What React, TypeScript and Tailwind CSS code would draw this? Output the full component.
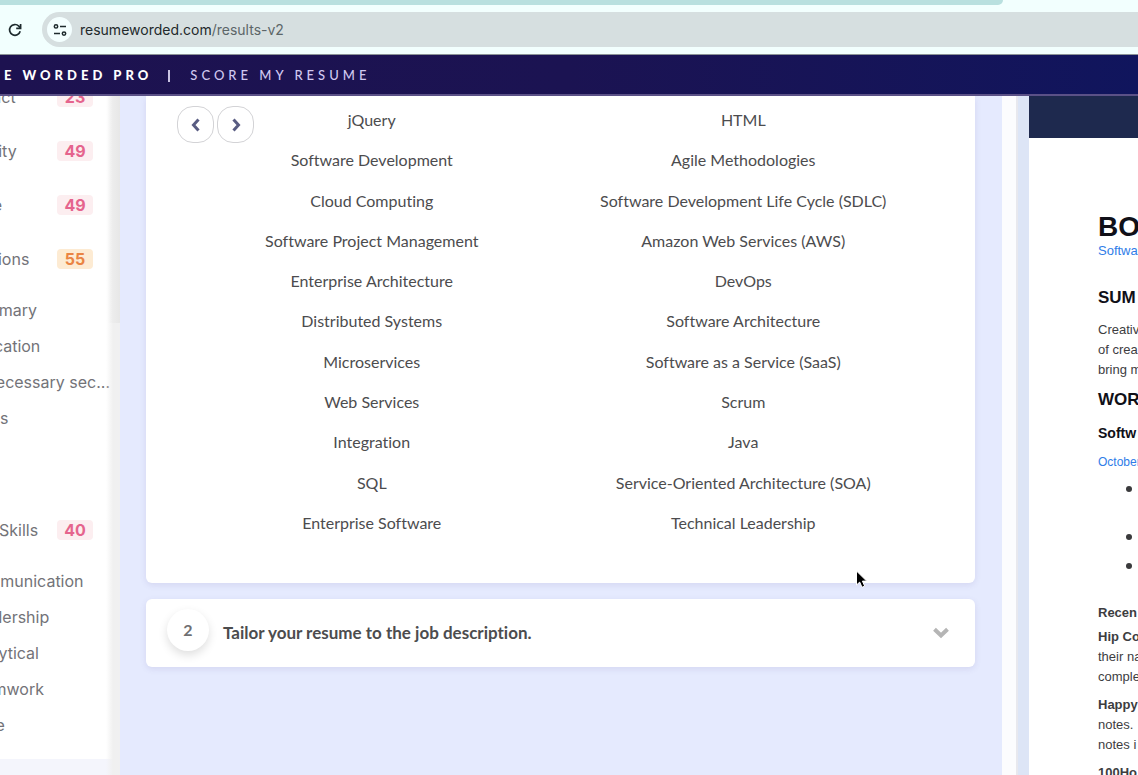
import React from "react";

type Tone = "low" | "mid";

const tones: Record<Tone, string> = {
  low: "bg-[#fceef0] text-[#e5648d]",
  mid: "bg-[#fdebd3] text-[#ea8443]",
};

const keywords: [string, string][] = [
  ["jQuery", "HTML"],
  ["Software Development", "Agile Methodologies"],
  ["Cloud Computing", "Software Development Life Cycle (SDLC)"],
  ["Software Project Management", "Amazon Web Services (AWS)"],
  ["Enterprise Architecture", "DevOps"],
  ["Distributed Systems", "Software Architecture"],
  ["Microservices", "Software as a Service (SaaS)"],
  ["Web Services", "Scrum"],
  ["Integration", "Java"],
  ["SQL", "Service-Oriented Architecture (SOA)"],
  ["Enterprise Software", "Technical Leadership"],
];

function Category({ name, score, tone = "low" }: { name: string; score: number; tone?: Tone }) {
  return (
    <a href="#" className="flex h-[54px] items-center justify-between pr-[26px]">
      <span>{name}</span>
      <span className={`flex h-5 w-9 items-center justify-center rounded-sm text-base font-bold ${tones[tone]}`}>
        {score}
      </span>
    </a>
  );
}

function SubList({ items }: { items: string[] }) {
  return (
    <ul className="pt-1.5 pl-px">
      {items.map((item) => (
        <li key={item}>
          <a href="#" className="flex h-9 items-center">
            {item}
          </a>
        </li>
      ))}
    </ul>
  );
}

function BrowserBar() {
  return (
    <div className="shrink-0 border-b border-[#8b9396] bg-[#f2fffe]">
      <div className="mr-[135px] h-[5px] rounded-br-lg bg-[#b9e0df]" />
      <div className="flex items-center pt-[7px] pb-[7px] pl-[7px]">
        <button type="button" aria-label="Reload" className="text-[#1f2b2e]">
          <svg width="16" height="16" viewBox="0 0 16 16" fill="none" stroke="currentColor" strokeWidth="1.7">
            <path d="M13.2 9.300A5.400 5.400 0 1 1 11.800 4.100L13.400 5.800" />
            <path d="M13.600 2v4.400H9.200" />
          </svg>
        </button>
        <div className="ml-[19px] flex h-[35px] grow items-center rounded-l-full bg-[#d6dfe0] pl-[5px]">
          <button
            type="button"
            aria-label="View site information"
            className="flex size-[25px] shrink-0 items-center justify-center rounded-full bg-[#f4ffff] text-[#1f2b2e]"
          >
            <svg width="14" height="14" viewBox="0 0 14 14" fill="none" stroke="currentColor" strokeWidth="1.5">
              <circle cx="3" cy="3.4" r="1.7" />
              <path d="M7 3.4h6M1 10.6h6" />
              <circle cx="11" cy="10.6" r="1.7" />
            </svg>
          </button>
          <div className="pl-2 font-['Inter',sans-serif] text-[14px] text-[#22292b]">
            resumeworded.com<span className="text-[#5c6668]">/results-v2</span>
          </div>
        </div>
      </div>
    </div>
  );
}

function SiteHeader() {
  return (
    <header className="flex h-[41px] shrink-0 items-center border-b-2 border-[#5b5187] bg-linear-to-r from-[#1d1250] via-[#1b1352] to-[#10155d] pt-0.5 pl-1 font-['Lato',sans-serif] text-[13px] tracking-[4px] whitespace-nowrap">
      <a href="#" className="font-black text-white">E WORDED PRO</a>
      <span className="mr-5 ml-4 h-3 w-0.5 bg-[#c9c3e2]" />
      <a href="#" className="font-medium text-[#d0c8f0]">SCORE MY RESUME</a>
    </header>
  );
}

function Sidebar() {
  return (
    <aside className="relative w-[120px] shrink-0 overflow-hidden bg-[#f4f5fc] text-base whitespace-nowrap text-[#737378]">
      <nav className="-mt-[26px] -ml-9 bg-white pr-px pb-4">
        <Category name="Impact" score={23} />
        <Category name="Brevity" score={49} />
        <Category name="Style" score={49} />
        <Category name="Sections" score={55} tone="mid" />
        <SubList items={["Summary", "Education", "Unnecessary sec...", "Dates"]} />
        <div className="pt-[67px]">
          <Category name="Soft Skills" score={40} />
        </div>
        <SubList items={["Communication", "Leadership", "Analytical", "Teamwork", "Drive"]} />
      </nav>
      <div className="absolute inset-y-0 right-0 w-3.5 bg-linear-to-r from-transparent via-[#f0f0f0] to-[#f0f0f1]" />
      <div className="absolute top-0 right-0 h-[227px] w-3 bg-linear-to-r from-transparent to-[#e7e7e7]" />
    </aside>
  );
}

function ArrowButton({ label, path }: { label: string; path: string }) {
  return (
    <button
      type="button"
      aria-label={label}
      className="flex size-[37px] items-center justify-center rounded-2xl border border-[#d3d3d6] bg-white text-[#595c82]"
    >
      <svg width="14" height="14" viewBox="0 0 14 14" fill="none" stroke="currentColor" strokeWidth="3">
        <path d={path} />
      </svg>
    </button>
  );
}

function Main() {
  return (
    <main className="min-w-0 grow bg-[#e5eafe] pr-[27px] pl-[26px] font-['Lato',sans-serif] text-[#4c4c4e] [font-variant-ligatures:none]">
      <section className="relative rounded-b-md bg-white pt-1 pr-[46px] pb-10 pl-10 shadow-[0_2px_6px_rgba(90,70,150,0.12)]">
        <div className="absolute top-[10px] left-[31px] flex gap-[3px]">
          <ArrowButton label="Previous" path="M9.5 1.5L4.5 7l5 5.5" />
          <ArrowButton label="Next" path="M4.5 1.5L9.5 7l-5 5.5" />
        </div>
        <ul className="grid min-h-[443px] grid-cols-2 items-center text-center text-base">
          {keywords.flat().map((word) => (
            <li key={word}>{word}</li>
          ))}
        </ul>
      </section>
      <button
        type="button"
        className="mt-4 flex h-[68px] w-full items-center rounded-md bg-white pr-[26px] pl-[21px] text-left shadow-[0_2px_6px_rgba(90,70,150,0.12)]"
      >
        <span className="mb-1.5 flex size-[42px] items-center justify-center rounded-full bg-white text-base font-bold text-[#707072] shadow-[0_4px_10px_rgba(0,0,0,0.13)]">
          2
        </span>
        <span className="grow pl-3.5 text-[17px] font-bold">Tailor your resume to the job description.</span>
        <svg width="16" height="12" viewBox="0 0 16 12" fill="none" stroke="#b5b5b5" strokeWidth="4">
          <path d="M1.500 2.200L8 8.400l6.500-6.200" />
        </svg>
      </button>
    </main>
  );
}

function Resume() {
  return (
    <article className="w-[109px] shrink-0 overflow-hidden bg-white font-['Liberation_Sans',sans-serif] text-[13px] leading-5 whitespace-nowrap text-[#3d3d3f]">
      <div className="h-[42px] bg-[#1e294e]" />
      <div className="pt-[74px] pl-[69px]">
        <h1 className="text-[28px] leading-[30px] font-bold text-[#101018]">BO</h1>
        <p className="-mt-px text-[#2f7de8]">Softwa</p>
        <h2 className="mt-[25px] text-[17px] leading-6 font-bold text-[#101018]">SUM</h2>
        <p className="mt-2.5">
          Creativ
          <br />
          of crea
          <br />
          bring m
        </p>
        <h2 className="mt-2 text-[17px] leading-6 font-bold text-[#101018]">WOR</h2>
        <h3 className="mt-[11px] text-[14px] font-bold text-[#101018]">Softw</h3>
        <p className="mt-[9px] text-[12px] text-[#2f7de8]">October</p>
        <ul className="flex flex-col pt-3.5 pl-[28px]">
          <li className="mb-[42px] size-1.5 rounded-full bg-[#3a3a3c]" />
          <li className="mb-[23px] size-1.5 rounded-full bg-[#3a3a3c]" />
          <li className="size-1.5 rounded-full bg-[#3a3a3c]" />
        </ul>
        <p className="mt-[34px] font-bold">Recen</p>
        <p className="mt-1">
          <b>Hip Co</b>
          <br />
          their na
          <br />
          comple
        </p>
        <p className="mt-2">
          <b>Happy</b>
          <br />
          notes.
          <br />
          notes i
        </p>
        <p className="mt-2 font-bold">100Ho</p>
      </div>
    </article>
  );
}

export default function App() {
  return (
    <div className="relative flex h-screen flex-col overflow-hidden font-['Inter',sans-serif]">
      <BrowserBar />
      <SiteHeader />
      <div className="flex min-h-0 grow overflow-hidden">
        <Sidebar />
        <Main />
        <div className="w-[14px] shrink-0 bg-[#fcfcfe]" />
        <div className="w-[13px] shrink-0 border-l-2 border-[#e8e8ee] bg-[#dde5f6]" />
        <Resume />
      </div>
      <svg
        className="absolute top-[570px] left-[855px]"
        width="14"
        height="20"
        viewBox="0 0 14 20"
        fill="#000"
        stroke="#fff"
        strokeWidth="1"
      >
        <path d="M1.500 1v14l3.200-2.900 2.300 5.200 2.700-1.200-2.300-5h4.300z" />
      </svg>
    </div>
  );
}
